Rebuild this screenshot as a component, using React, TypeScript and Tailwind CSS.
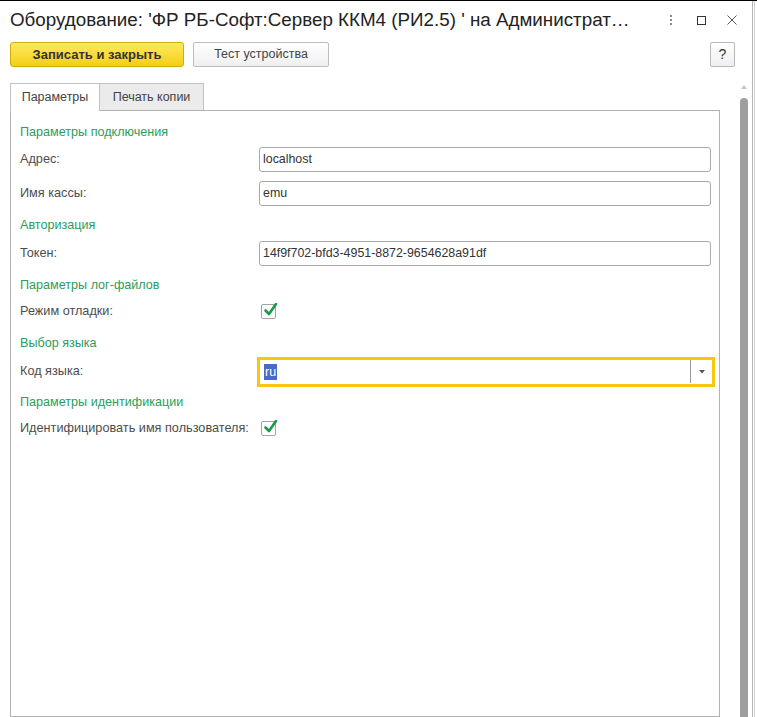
import React from "react";

const font = { fontFamily: '"Liberation Sans", Arial, sans-serif' };

function TextField({ value }: { value: string }) {
  return (
    <div className="flex h-[25px] flex-1 items-center rounded-[3px] border border-[#a9a9a9] bg-white pl-[3px] text-[12.4px] text-[#333]">
      {value}
    </div>
  );
}

function CheckBox() {
  return (
    <div className="relative h-[15px] w-[15px] rounded-[2px] border border-[#a3a3a3] bg-white">
      <svg
        className="absolute left-[1px] top-[-4px]"
        width="15"
        height="16"
        viewBox="0 0 15 16"
        aria-hidden="true"
      >
        <path d="M2.5 9.5 L6 13 L13 3" fill="none" stroke="#1a9a4a" strokeWidth="2.6" strokeLinecap="round" strokeLinejoin="round" />
      </svg>
    </div>
  );
}

function Group({ title, className = "" }: { title: string; className?: string }) {
  return (
    <div className={`flex h-[20px] items-center text-[12.6px] text-[#2a9d5c] ${className}`}>{title}</div>
  );
}

function Row({ label, children, className = "" }: { label: string; children: React.ReactNode; className?: string }) {
  return (
    <div className={`flex h-[25px] items-center ${className}`}>
      <div className="w-[239px] shrink-0 text-[12.7px] text-[#4d4d4d]">{label}</div>
      {children}
    </div>
  );
}

export default function App() {
  return (
    <div style={font} className="flex h-[717px] w-[757px] overflow-hidden border-t border-black bg-white">
      <div className="flex w-[752px] shrink-0 flex-col">
        {/* title bar */}
        <div className="mt-[7px] flex h-[24px] items-center pl-[10px]">
          <div className="flex-1 whitespace-nowrap text-[18.8px] leading-[24px] text-[#222]">
            Оборудование: 'ФР РБ-Софт:Сервер ККМ4 (РИ2.5) ' на Администрат…
          </div>
          <div className="flex items-center">
            <div className="mr-[25px] flex flex-col gap-[2px]">
              <span className="h-[2px] w-[2px] bg-[#8a8a8a]" />
              <span className="h-[2px] w-[2px] bg-[#8a8a8a]" />
              <span className="h-[2px] w-[2px] bg-[#8a8a8a]" />
            </div>
            <div className="mr-[21px] h-[9px] w-[9px] border border-[#333]" />
            <svg width="10" height="10" viewBox="0 0 10 10" className="mr-[15px]" aria-hidden="true">
              <path d="M0.5 0.5 L9.5 9.5 M9.5 0.5 L0.5 9.5" stroke="#555" strokeWidth="1" />
            </svg>
          </div>
        </div>

        {/* toolbar */}
        <div className="mt-[10px] flex h-[25px] items-center pl-[10px] pr-[17px]">
          <button
            type="button"
            className="h-[25px] w-[174px] rounded-[3px] border border-[#cfae0a] bg-gradient-to-b from-[#ffe959] to-[#f3cf00] text-[13px] font-bold text-[#333]"
          >
            Записать и закрыть
          </button>
          <button
            type="button"
            className="ml-[9px] h-[25px] w-[136px] rounded-[2px] border border-[#bdbdbd] bg-gradient-to-b from-white to-[#efefef] text-[12.5px] text-[#444]"
          >
            Тест устройства
          </button>
          <div className="flex-1" />
          <button
            type="button"
            className="h-[25px] w-[25px] rounded-[2px] border border-[#b8b8b8] bg-gradient-to-b from-white to-[#efefef] text-[14px] text-[#333]"
          >
            ?
          </button>
        </div>

        {/* body */}
        <div className="mt-[13px] flex min-h-0 flex-1">
          <div className="flex w-[720px] shrink-0 flex-col pl-[10px] pt-[3px]">
            <div className="flex h-[27px] text-[12.5px] text-[#444]">
              <div className="relative z-10 flex h-[28px] w-[90px] items-center justify-center border border-b-0 border-[#c2c2c2] bg-white">
                Параметры
              </div>
              <div className="flex h-[27px] w-[104px] items-center justify-center border border-b-0 border-l-0 border-[#c2c2c2] bg-[#ebebeb]">
                Печать копии
              </div>
            </div>
            <div className="flex flex-1 flex-col border border-[#b3b3b3] pl-[9px] pr-[8px]">
              <Group title="Параметры подключения" className="mt-[11px]" />
              <Row label="Адрес:" className="mt-[5px]">
                <TextField value="localhost" />
              </Row>
              <Row label="Имя кассы:" className="mt-[9px]">
                <TextField value="emu" />
              </Row>
              <Group title="Авторизация" className="mt-[9px]" />
              <Row label="Токен:" className="mt-[6px]">
                <TextField value="14f9f702-bfd3-4951-8872-9654628a91df" />
              </Row>
              <Group title="Параметры лог-файлов" className="mt-[9px]" />
              <Row label="Режим отладки:" className="mt-[4px]">
                <div className="ml-[2px]">
                  <CheckBox />
                </div>
              </Row>
              <Group title="Выбор языка" className="mt-[9px]" />
              <Row label="Код языка:" className="mt-[6px]">
                <div className="-mr-[2px] flex h-[26px] flex-1 items-center border border-[#f9c80e] bg-white pl-[4px] outline-2 outline-[#f9c80e]">
                  <span className="bg-[#4b6bcc] px-[1px] text-[12.5px] leading-[16px] text-white">ru</span>
                  <div className="flex-1" />
                  <div className="h-[23px] w-px bg-[#9a9a9a]" />
                  <div className="flex w-[21px] justify-center">
                    <svg width="6" height="4" viewBox="0 0 6 4" aria-hidden="true">
                      <path d="M0 0 H6 L3 3.5 Z" fill="#555" />
                    </svg>
                  </div>
                </div>
              </Row>
              <Group title="Параметры идентификации" className="mt-[8px]" />
              <Row label="Идентифицировать имя пользователя:" className="mt-[4px]">
                <div className="ml-[2px]">
                  <CheckBox />
                </div>
              </Row>
            </div>
          </div>

          {/* scrollbar */}
          <div className="ml-[20px] flex w-[8px] flex-col items-center">
            <svg width="6" height="4" viewBox="0 0 6 4" className="mt-[5px]" aria-hidden="true">
              <path d="M0 4 H6 L3 0 Z" fill="#c4c4c4" />
            </svg>
            <div className="mt-[9px] w-[8px] flex-1 rounded-t-full bg-[#9e9e9e]" />
          </div>
        </div>
      </div>
      <div className="w-px bg-[#b5b5b5]" />
      <div className="w-px bg-white" />
      <div className="w-px bg-[#cfcfcf]" />
      <div className="flex-1 bg-white" />
    </div>
  );
}
